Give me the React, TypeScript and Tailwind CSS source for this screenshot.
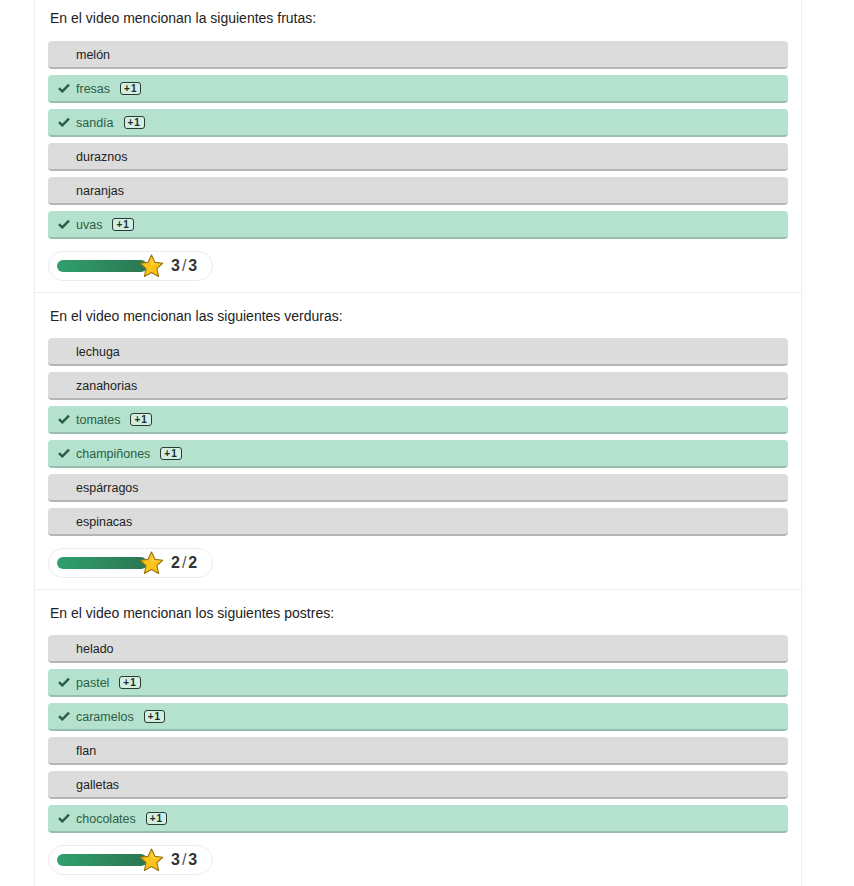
import React from 'react';

interface Option {
  label: string;
  correct: boolean;
}

interface Question {
  title: string;
  options: Option[];
  score: string;
}

const questions: Question[] = [
  {
    title: 'En el video mencionan la siguientes frutas:',
    options: [
      { label: 'melón', correct: false },
      { label: 'fresas', correct: true },
      { label: 'sandía', correct: true },
      { label: 'duraznos', correct: false },
      { label: 'naranjas', correct: false },
      { label: 'uvas', correct: true },
    ],
    score: '3/3',
  },
  {
    title: 'En el video mencionan las siguientes verduras:',
    options: [
      { label: 'lechuga', correct: false },
      { label: 'zanahorias', correct: false },
      { label: 'tomates', correct: true },
      { label: 'champiñones', correct: true },
      { label: 'espárragos', correct: false },
      { label: 'espinacas', correct: false },
    ],
    score: '2/2',
  },
  {
    title: 'En el video mencionan los siguientes postres:',
    options: [
      { label: 'helado', correct: false },
      { label: 'pastel', correct: true },
      { label: 'caramelos', correct: true },
      { label: 'flan', correct: false },
      { label: 'galletas', correct: false },
      { label: 'chocolates', correct: true },
    ],
    score: '3/3',
  },
];

function Check() {
  return (
    <svg width="12" height="10" viewBox="0 0 12 10" className="absolute left-[10px] top-[8px]">
      <path d="M1 5.2 L4.3 8.4 L11 1.6" fill="none" stroke="#2c5e45" strokeWidth="2.4" />
    </svg>
  );
}

function Star() {
  return (
    <svg width="27" height="27" viewBox="0 0 24 24" className="absolute left-[89px] top-[1px]">
      <path
        d="M12 1.8 L15 8.3 L22 9.1 L16.8 13.9 L18.3 20.9 L12 17.3 L5.7 20.9 L7.2 13.9 L2 9.1 L9 8.3 Z"
        fill="#fcc419"
        stroke="#9a7414"
        strokeWidth="1"
        strokeLinejoin="round"
      />
      <path d="M12 3.5 L14.2 8.9 L19.5 9.7 L12 10.5 Z" fill="#ffe066" opacity="0.6" />
    </svg>
  );
}

function Item({ option }: { option: Option }) {
  return (
    <div
      className={`relative h-[28px] rounded-[4px] flex items-center pl-[28px] border-b-2 ${
        option.correct
          ? 'bg-[#b5e2cf] border-[#98bfae] text-[#2c5e45]'
          : 'bg-[#dcdcdc] border-[#b5b5b5] text-[#222]'
      }`}
    >
      {option.correct && <Check />}
      <span className="text-[12.5px] mt-[2px]">{option.label}</span>
      {option.correct && (
        <span className="ml-[10px] mt-[1px] h-[13px] px-[3px] border-[1.5px] border-[#2a3b33] rounded-[3px] bg-white/40 flex items-center text-[10px] font-bold leading-none tracking-[1px] text-[#1f2d26]">
          +1
        </span>
      )}
    </div>
  );
}

function Section({ q, first }: { q: Question; first: boolean }) {
  return (
    <div className={`px-[13px] pb-[11px] border-b border-[#eeeeee] ${first ? 'pt-[8px]' : 'pt-[13px]'}`}>
      <p className="h-[20px] leading-[20px] text-[14px] text-[#222] pl-[2px]">{q.title}</p>
      <div className={`${first ? 'mt-[13px]' : 'mt-[12px]'} flex flex-col gap-[6px]`}>
        {q.options.map((o) => (
          <Item key={o.label} option={o} />
        ))}
      </div>
      <div className="mt-[12px] relative w-[165px] h-[30px] rounded-full border border-[#ececec] bg-white flex items-center">
        <div className="ml-[8px] w-[90px] h-[12px] rounded-full bg-gradient-to-r from-[#30a06d] to-[#2a7652]" />
        <Star />
        <span className="ml-[24px] text-[16px] font-bold text-[#333]">
          {q.score.split('/')[0]}
          <span className="mx-[2px] font-normal text-[#555]">/</span>
          {q.score.split('/')[1]}
        </span>
      </div>
    </div>
  );
}

export default function App() {
  return (
    <div className="min-h-[886px] bg-white" style={{ fontFamily: '"Liberation Sans", Arial, sans-serif' }}>
      <div className="ml-[34px] w-[768px] border-x border-[#eeeeee] min-h-[886px]">
        {questions.map((q, i) => (
          <Section key={q.title} q={q} first={i === 0} />
        ))}
      </div>
    </div>
  );
}
